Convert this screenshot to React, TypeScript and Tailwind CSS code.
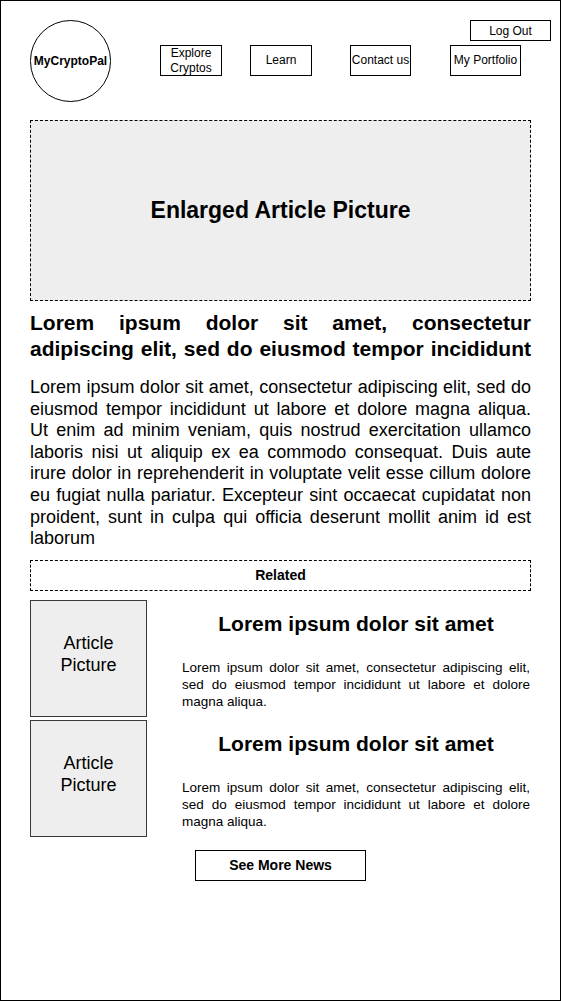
import React from "react"

const navItems = [
  { label: "Explore Cryptos", w: "w-[62px]", ml: "ml-[49px]" },
  { label: "Learn", w: "w-[62px]", ml: "ml-[28px]" },
  { label: "Contact us", w: "w-[61px]", ml: "ml-[38px]" },
  { label: "My Portfolio", w: "w-[71px]", ml: "ml-[39px]" },
]

const body =
  "Lorem ipsum dolor sit amet, consectetur adipiscing elit, sed do eiusmod tempor incididunt ut labore et dolore magna aliqua. Ut enim ad minim veniam, quis nostrud exercitation ullamco laboris nisi ut aliquip ex ea commodo consequat. Duis aute irure dolor in reprehenderit in voluptate velit esse cillum dolore eu fugiat nulla pariatur. Excepteur sint occaecat cupidatat non proident, sunt in culpa qui officia deserunt mollit anim id est laborum"

const RelatedCard = () => (
  <div className="flex h-[116px]">
    <div className="w-[117px] h-[117px] shrink-0 border border-[#36393d] bg-[#eeeeee] flex items-center justify-center text-center text-[18px] leading-[22px] pb-[8px]">
      Article<br />Picture
    </div>
    <div className="ml-[35px] w-[348px] flex flex-col">
      <h3 className="mt-[11px] text-center font-bold text-[21px] leading-[26px]">Lorem ipsum dolor sit amet</h3>
      <p className="mt-[22px] text-[13.5px] leading-[17px] text-justify">
        Lorem ipsum dolor sit amet, consectetur adipiscing elit, sed do eiusmod tempor incididunt ut labore et dolore magna aliqua.
      </p>
    </div>
  </div>
)

export default function App() {
  return (
    <div className="w-[561px] h-[1001px] border border-black bg-white text-black font-['Liberation_Sans',Arial,sans-serif] flex flex-col">
      {/* header */}
      <div className="flex pl-[29px] pr-[9px] pt-[19px]">
        <div className="w-[81px] h-[82px] rounded-full border border-black flex items-center justify-center text-[12px] font-bold shrink-0">
          MyCryptoPal
        </div>
        <div className="flex-1 flex flex-col">
          <div className="flex justify-end">
            <button className="w-[81px] h-[21px] border border-black text-[12px] leading-none">Log Out</button>
          </div>
          <div className="flex mt-[4px]">
            {navItems.map((n) => (
              <div
                key={n.label}
                className={`${n.w} ${n.ml} h-[31px] border border-black flex items-center justify-center text-center text-[12px] leading-[15px]`}
              >
                {n.label === "Explore Cryptos" ? (
                  <span>Explore<br />Cryptos</span>
                ) : (
                  n.label
                )}
              </div>
            ))}
          </div>
        </div>
      </div>

      <div className="px-[29px] flex flex-col">
        {/* hero */}
        <div className="mt-[18px] w-[501px] h-[181px] border border-dashed border-black bg-[#eeeeee] flex items-center justify-center">
          <span className="text-[23px] font-bold">Enlarged Article Picture</span>
        </div>

        <h1 className="mt-[9px] w-[501px] text-[21px] leading-[26px] font-bold text-justify [text-align-last:justify]">
          Lorem ipsum dolor sit amet, consectetur<br />adipiscing elit, sed do eiusmod tempor incididunt
        </h1>

        <p className="mt-[15px] w-[501px] text-[18px] leading-[21.6px] text-justify">{body}</p>

        <div className="mt-[10px] w-[501px] h-[31px] border border-dashed border-black flex items-center justify-center text-[14px] font-bold">
          Related
        </div>

        <div className="mt-[9px] flex flex-col gap-[4px]">
          <RelatedCard />
          <RelatedCard />
        </div>

        <div className="mt-[14px] flex justify-center">
          <button className="w-[171px] h-[31px] border border-black text-[14px] font-bold">See More News</button>
        </div>
      </div>
    </div>
  )
}
